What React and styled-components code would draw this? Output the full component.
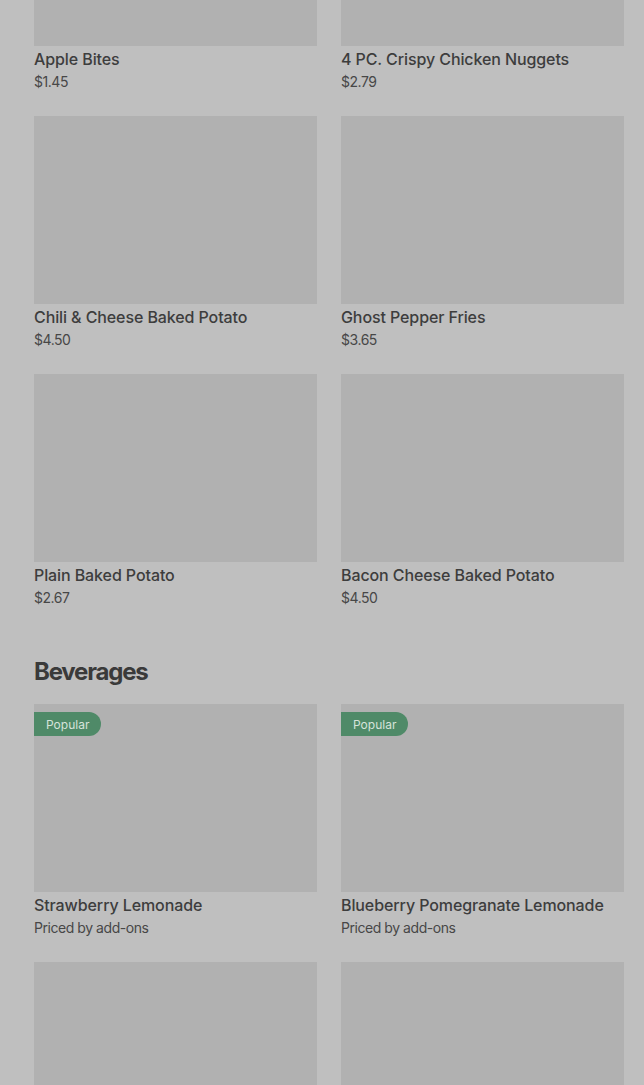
import React from "react";
import styled, { createGlobalStyle } from "styled-components";

const Global = createGlobalStyle`
  html, body { margin: 0; padding: 0; background: #bfbfbf; }
  body { font-family: Inter, "Noto Sans", sans-serif; color: #3b3b3b; overflow: hidden; }
`;

const Frame = styled.div`
  height: 1085px;
  overflow: hidden;
`;

const Page = styled.div`
  padding: 0 20px 0 34px;
  margin-top: -142px;
`;

const Section = styled.section`
  & + & { margin-top: 48px; }
`;

const Heading = styled.h2`
  margin: 0 0 16px;
  font-size: 24px;
  line-height: 32px;
  font-weight: 700;
  letter-spacing: -1.2px;
  color: #3a3a3a;
`;

const Grid = styled.div`
  display: grid;
  grid-template-columns: 1fr 1fr;
  column-gap: 24px;
  row-gap: 24px;
`;

const Card = styled.div`
  display: flex;
  flex-direction: column;
`;

const Thumb = styled.div`
  position: relative;
  height: 188px;
  background: #b1b1b1;
`;

const Badge = styled.span`
  position: absolute;
  left: 0;
  top: 8px;
  height: 24px;
  display: flex;
  align-items: center;
  padding: 0 12px;
  border-radius: 0 12px 12px 0;
  background: #4f8a68;
  color: #d6e3da;
  font-size: 12px;
`;

const Title = styled.div`
  margin-top: 2px;
  font-size: 16px;
  line-height: 22px;
  font-weight: 500;
  letter-spacing: -0.1px;
  color: #3d3d3d;
`;

const Price = styled.div`
  margin-top: 2px;
  font-size: 14px;
  line-height: 20px;
  color: #474747;
  letter-spacing: -0.45px;
`;

const sides = [
  { name: "Apple Bites", price: "$1.45" },
  { name: "4 PC. Crispy Chicken Nuggets", price: "$2.79" },
  { name: "Chili & Cheese Baked Potato", price: "$4.50" },
  { name: "Ghost Pepper Fries", price: "$3.65" },
  { name: "Plain Baked Potato", price: "$2.67" },
  { name: "Bacon Cheese Baked Potato", price: "$4.50" },
];

const beverages = [
  { name: "Strawberry Lemonade", price: "Priced by add-ons", popular: true },
  { name: "Blueberry Pomegranate Lemonade", price: "Priced by add-ons", popular: true },
  { name: "", price: "" },
  { name: "", price: "" },
];

function Item({ item }) {
  return (
    <Card>
      <Thumb>{item.popular && <Badge>Popular</Badge>}</Thumb>
      {item.name && <Title>{item.name}</Title>}
      {item.price && <Price>{item.price}</Price>}
    </Card>
  );
}

export default function App() {
  return (
    <>
      <Global />
      <Frame>
        <Page>
          <Section>
            <Grid>
              {sides.map((it, i) => (
                <Item key={i} item={it} />
              ))}
            </Grid>
          </Section>
          <Section>
            <Heading>Beverages</Heading>
            <Grid>
              {beverages.map((it, i) => (
                <Item key={i} item={it} />
              ))}
            </Grid>
          </Section>
        </Page>
      </Frame>
    </>
  );
}
